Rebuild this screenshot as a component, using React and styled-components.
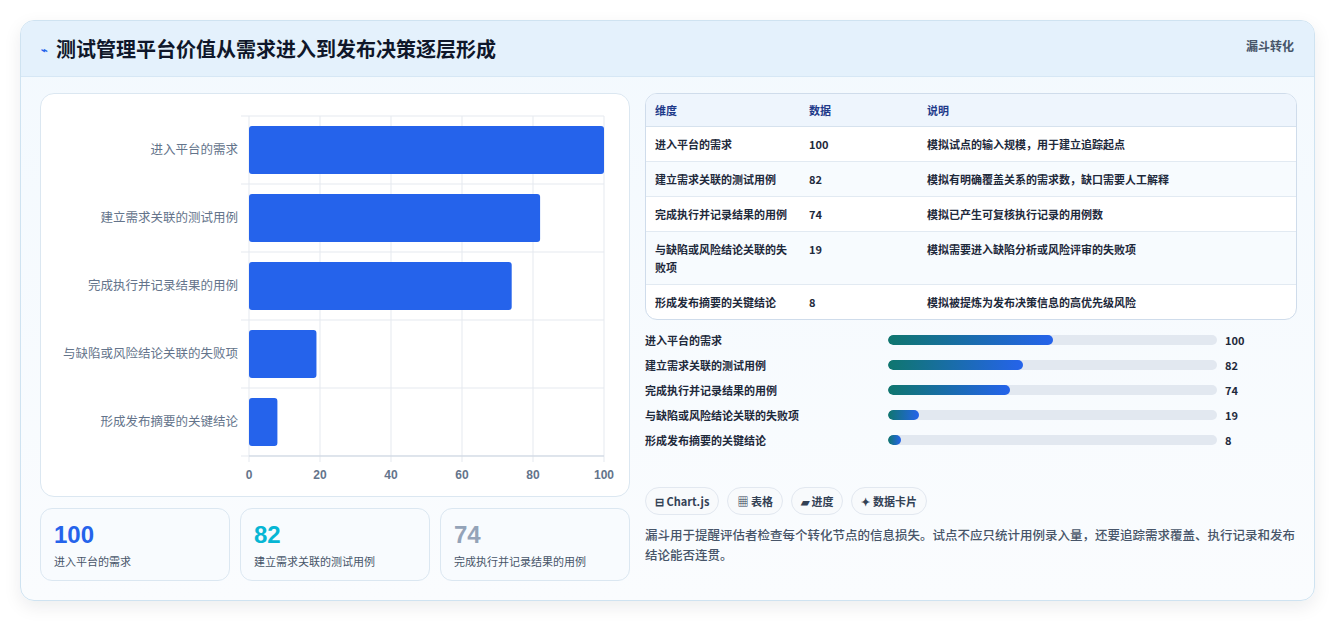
import React from 'react';
import styled, { createGlobalStyle } from 'styled-components';

const Global = createGlobalStyle`
  html, body { margin: 0; background: #f4f6f9; }
  body { font-family: "Noto Sans CJK SC", "Noto Sans", sans-serif; color: #0f172a; }
`;

const rows = [
  { name: '进入平台的需求', v: 100, note: '模拟试点的输入规模，用于建立追踪起点' },
  { name: '建立需求关联的测试用例', v: 82, note: '模拟有明确覆盖关系的需求数，缺口需要人工解释' },
  { name: '完成执行并记录结果的用例', v: 74, note: '模拟已产生可复核执行记录的用例数' },
  { name: '与缺陷或风险结论关联的失败项', v: 19, note: '模拟需要进入缺陷分析或风险评审的失败项' },
  { name: '形成发布摘要的关键结论', v: 8, note: '模拟被提炼为发布决策信息的高优先级风险' },
];

const Page = styled.div`
  background: #fff;
  padding: 20px 21px 20px 20px;
  height: 581px;
`;
const Card = styled.div`
  border: 1px solid #cfe3f1;
  border-radius: 14px;
  background: linear-gradient(180deg, #f3f9fe 0%, #fafcfe 100%);
  box-shadow: 0 6px 18px rgba(15, 23, 42, 0.08);
  overflow: hidden;
`;
const Header = styled.div`
  height: 55px;
  background: #e4f1fc;
  border-bottom: 1px solid #d6e7f5;
  display: flex;
  align-items: center;
  justify-content: space-between;
  padding: 0 20px;
`;
const Title = styled.h1`
  margin: 0;
  font-size: 20px;
  font-weight: 700;
  color: #0f172a;
  display: flex;
  align-items: center;
  gap: 8px;
  span { font-size: 11px; color: #2563eb; }
`;
const Tag = styled.div`
  font-size: 12px;
  font-weight: 700;
  color: #475569;
  align-self: flex-start;
  margin-top: 16px;
`;
const Body = styled.div`
  display: grid;
  grid-template-columns: 590px 652px;
  gap: 15px;
  padding: 16px 17px 19px 19px;
`;
const Col = styled.div`
  display: flex;
  flex-direction: column;
`;
const ChartBox = styled.div`
  height: 404px;
  box-sizing: border-box;
  border: 1px solid #dbe7f1;
  border-radius: 14px;
  background: #fff;
`;
const Stats = styled.div`
  display: grid;
  grid-template-columns: repeat(3, 1fr);
  gap: 10px;
  margin-top: 11px;
`;
const Stat = styled.div`
  height: 73px;
  box-sizing: border-box;
  border: 1px solid #dbe7f1;
  border-radius: 12px;
  background: #f8fbfe;
  padding: 11px 13px;
`;
const StatNum = styled.div`
  font-family: "Liberation Sans", sans-serif;
  font-size: 24px;
  font-weight: 700;
  color: ${p => p.$c};
  line-height: 30px;
`;
const StatLabel = styled.div`
  font-size: 11px;
  color: #475569;
  margin-top: 3px;
`;
const Table = styled.table`
  width: 100%;
  border-collapse: separate;
  border-spacing: 0;
  border: 1px solid #cfdceb;
  border-radius: 12px;
  overflow: hidden;
  background: #fff;
  font-size: 11px;
  font-weight: 700;
  color: #1e293b;
  th { background: #eef5fd; color: #1e3a8a; text-align: left; height: 32px; padding: 0 9px; border-bottom: 1px solid #d6e2ee; }
  td { padding: 8px 9px; vertical-align: top; line-height: 18px; border-bottom: 1px solid #e2eaf2; }
  tr:nth-child(even) td { background: #f7fbfe; }
  tr:last-child td { border-bottom: none; }
`;
const Progress = styled.div`
  margin-top: 11px;
  display: flex;
  flex-direction: column;
  gap: 7px;
`;
const PRow = styled.div`
  display: grid;
  grid-template-columns: 243px 337px 1fr;
  align-items: center;
  height: 18px;
  font-size: 11px;
  font-weight: 700;
  color: #1e293b;
`;
const Track = styled.div`
  height: 10px;
  border-radius: 5px;
  background: #e2e8f0;
  margin-right: 8px;
  overflow: hidden;
`;
const Fill = styled.div`
  height: 100%;
  border-radius: 5px;
  background: linear-gradient(90deg, #0f766e, #2563eb);
`;
const Chips = styled.div`
  display: flex;
  gap: 8px;
  margin-top: 38px;
`;
const Chip = styled.div`
  height: 28px;
  box-sizing: border-box;
  border: 1px solid #e2e8f0;
  border-radius: 14px;
  background: #f8fafc;
  padding: 0 9px;
  display: flex;
  align-items: center;
  font-size: 11px;
  font-weight: 700;
  color: #334155;
`;
const Para = styled.p`
  margin: 10px 0 0;
  font-size: 12.5px;
  line-height: 20px;
  font-weight: 500;
  color: #475569;
`;

function Chart() {
  const x0 = 208, x1 = 563, y0 = 22, y1 = 362;
  const step = (y1 - y0) / 5;
  return (
    <svg width="588" height="402" style={{ display: 'block' }}>
      {[0, 20, 40, 60, 80, 100].map(t => {
        const x = x0 + (x1 - x0) * t / 100;
        return (
          <g key={t}>
            <line x1={x} x2={x} y1={y0} y2={y1 + 6} stroke="#e5e9ef" />
            <text x={x} y={385} textAnchor="middle" fontSize="12" fontWeight="700" fill="#64748b" fontFamily="Liberation Sans, sans-serif">{t}</text>
          </g>
        );
      })}
      {[0, 1, 2, 3, 4, 5].map(i => (
        <line key={i} x1={x0 - 8} x2={x1} y1={y0 + i * step} y2={y0 + i * step} stroke="#e5e9ef" />
      ))}
      <line x1={x0} x2={x1} y1={y1} y2={y1} stroke="#cbd5e1" />
      {rows.map((r, i) => {
        const cy = y0 + step * (i + 0.5);
        return (
          <g key={r.name}>
            <rect x={x0} y={cy - 24} width={(x1 - x0) * r.v / 100} height={48} rx="3" fill="#2563eb" />
            <text x={x0 - 11} y={cy + 4} textAnchor="end" fontSize="12.5" fill="#64748b" fontFamily="Noto Sans CJK SC, sans-serif">{r.name}</text>
          </g>
        );
      })}
    </svg>
  );
}

export default function App() {
  return (
    <>
      <Global />
      <Page>
        <Card>
          <Header>
            <Title><span>⌁</span>测试管理平台价值从需求进入到发布决策逐层形成</Title>
            <Tag>漏斗转化</Tag>
          </Header>
          <Body>
            <Col>
              <ChartBox><Chart /></ChartBox>
              <Stats>
                <Stat><StatNum $c="#2563eb">100</StatNum><StatLabel>进入平台的需求</StatLabel></Stat>
                <Stat><StatNum $c="#06b6d4">82</StatNum><StatLabel>建立需求关联的测试用例</StatLabel></Stat>
                <Stat><StatNum $c="#94a3b8">74</StatNum><StatLabel>完成执行并记录结果的用例</StatLabel></Stat>
              </Stats>
            </Col>
            <Col>
              <Table>
                <thead>
                  <tr><th style={{ width: 136 }}>维度</th><th style={{ width: 100 }}>数据</th><th>说明</th></tr>
                </thead>
                <tbody>
                  {rows.map(r => (
                    <tr key={r.name}><td>{r.name}</td><td>{r.v}</td><td>{r.note}</td></tr>
                  ))}
                </tbody>
              </Table>
              <Progress>
                {rows.map(r => (
                  <PRow key={r.name}>
                    <span>{r.name}</span>
                    <Track><Fill style={{ width: `${r.v / 2}%` }} /></Track>
                    <span>{r.v}</span>
                  </PRow>
                ))}
              </Progress>
              <Chips>
                <Chip>⊟ Chart.js</Chip>
                <Chip>▦ 表格</Chip>
                <Chip>▰ 进度</Chip>
                <Chip>✦ 数据卡片</Chip>
              </Chips>
              <Para>漏斗用于提醒评估者检查每个转化节点的信息损失。试点不应只统计用例录入量，还要追踪需求覆盖、执行记录和发布结论能否连贯。</Para>
            </Col>
          </Body>
        </Card>
      </Page>
    </>
  );
}
